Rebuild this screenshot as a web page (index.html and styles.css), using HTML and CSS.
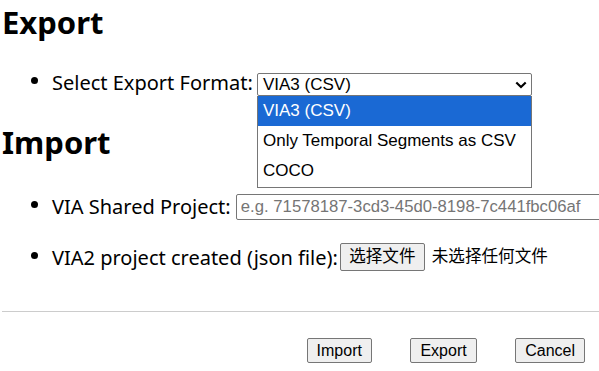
FILE: index.html
```html
<!DOCTYPE html>
<html>
<head>
<meta charset="utf-8">
<link rel="stylesheet" href="styles.css">
</head>
<body>
<div class="page">
  <h2 class="section-title">Export</h2>
  <ul class="opts export-opts">
    <li class="opt-row">
      <span class="label">Select Export Format:</span>
      <span class="select-wrap">
        <span class="select">
          <span class="select-value">VIA3 (CSV)</span>
          <svg class="chev" width="12" height="8" viewBox="0 0 12 8"><path d="M1.3 1.5 L6 6 L10.7 1.5" fill="none" stroke="#000" stroke-width="2.2"/></svg>
        </span>
        <span class="dropdown">
          <span class="dd-item active">VIA3 (CSV)</span>
          <span class="dd-item">Only Temporal Segments as CSV</span>
          <span class="dd-item">COCO</span>
        </span>
      </span>
    </li>
  </ul>
  <h2 class="section-title import-title">Import</h2>
  <ul class="opts import-opts">
    <li class="opt-row">
      <span class="label">VIA Shared Project:</span>
      <input class="text-input" type="text" placeholder="e.g. 71578187-3cd3-45d0-8198-7c441fbc06af">
    </li>
    <li class="opt-row second">
      <span class="label">VIA2 project created (json file):</span>
      <span class="file-btn">选择文件</span>
      <span class="file-none">未选择任何文件</span>
    </li>
  </ul>
  <hr class="divider">
  <div class="actions">
    <button class="btn">Import</button>
    <button class="btn">Export</button>
    <button class="btn">Cancel</button>
  </div>
</div>
</body>
</html>
```

FILE: styles.css
```css
html, body {
  margin: 0;
  padding: 0;
  background: #fff;
  overflow: hidden;
}
.page {
  padding: 0 0 0 2px;
  font-family: "Noto Sans", sans-serif;
  color: #000;
  overflow: hidden;
}
.section-title {
  font-size: 31px;
  font-weight: 700;
  margin: 0;
  padding-top: 1px;
  line-height: 42px;
}
.import-title {
  margin-top: 24px;
}
.opts {
  padding-left: 50px;
  font-size: 20px;
  margin: 0;
}
.export-opts {
  margin-top: 25px;
}
.import-opts {
  margin-top: 29px;
}
.opt-row {
  line-height: 26px;
  white-space: nowrap;
}
.opt-row.second {
  margin-top: 23px;
}
.label {
  vertical-align: middle;
}
.select-wrap {
  position: relative;
  display: inline-block;
  vertical-align: middle;
  margin-left: -1px;
  margin-top: 4px;
}
.select {
  display: flex;
  align-items: center;
  justify-content: space-between;
  width: 275px;
  height: 23px;
  box-sizing: border-box;
  border: 1px solid #767676;
  border-radius: 2px;
  padding: 0 4px 0 5px;
  font-family: "Liberation Sans", Arial, sans-serif;
  font-size: 17px;
  line-height: 21px;
}
.dropdown {
  position: absolute;
  left: 0;
  top: 23px;
  width: 275px;
  box-sizing: border-box;
  border: 1px solid #767676;
  border-top: 0;
  background: #fff;
  display: flex;
  flex-direction: column;
  font-family: "Liberation Sans", Arial, sans-serif;
  font-size: 17px;
  z-index: 5;
  padding-bottom: 1px;
}
.dd-item {
  height: 30px;
  line-height: 30px;
  padding-left: 5px;
}
.dd-item.active {
  background: #1a69d4;
  color: #fff;
}
.text-input {
  vertical-align: middle;
  width: 400px;
  height: 26px;
  box-sizing: border-box;
  border: 1px solid #767676;
  border-radius: 2px;
  padding: 0 4px;
  font-family: "Liberation Sans", Arial, sans-serif;
  font-size: 16.7px;
}
.text-input::placeholder {
  color: #757575;
}
.file-btn {
  display: inline-block;
  vertical-align: middle;
  height: 28px;
  line-height: 26px;
  box-sizing: border-box;
  border: 1px solid #767676;
  border-radius: 2px;
  background: #efefef;
  padding: 0 8px;
  margin-left: -3px;
  font-family: "Liberation Sans", "Noto Sans CJK SC", sans-serif;
  font-size: 16.6px;
}
.file-none {
  vertical-align: middle;
  font-family: "Liberation Sans", "Noto Sans CJK SC", sans-serif;
  font-size: 16.6px;
  margin-left: 2px;
}
.divider {
  margin: 40px 0 0 0;
  border: 0;
  border-top: 1px solid #ccc;
  width: 597px;
}
.actions {
  display: flex;
  justify-content: flex-end;
  gap: 38.5px;
  padding: 26px 14px 0 0;
}
.btn {
  font-family: "Liberation Sans", Arial, sans-serif;
  font-size: 16px;
  height: 25px;
  padding: 0 9px;
  border: 1px solid #767676;
  border-radius: 2px;
  background: #efefef;
  color: #000;
}
```
